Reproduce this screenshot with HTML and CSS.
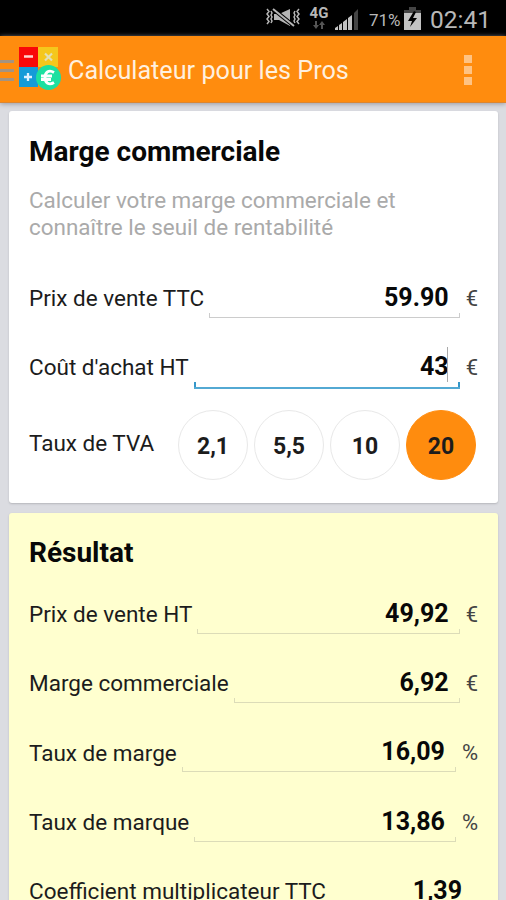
FILE: index.html
```html
<!DOCTYPE html>
<html lang="fr">
<head>
<meta charset="utf-8">
<title>Calculateur pour les Pros</title>
<link rel="stylesheet" href="styles.css">
</head>
<body>
<div class="status">
  <svg class="mute" width="34" height="20" viewBox="0 0 34 20" fill="none" stroke="#b5b5b5" stroke-width="1.5">
    <path d="M1 1l2 2.500-2 2.500 2 2.500-2 2.500 2 2.500-2 2.500M5 3l1 2-1 2 1 2-1 2 1 2-1 2M29 3l-1 2 1 2-1 2 1 2-1 2 1 2M33 1l-2 2.500 2 2.500-2 2.500 2 2.500-2 2.500 2 2.500"/>
    <path d="M8 6h5l11-5v17l-11-6H8z" fill="#b5b5b5" stroke="none"/>
    <path d="M7 1l21 17" stroke="#000" stroke-width="4"/>
    <path d="M7 1l21 17" stroke-width="2"/>
  </svg>
  <div class="network">
    <span>4G</span>
    <svg width="12" height="8" viewBox="0 0 12 8" fill="#555"><path d="M2 0h2v4h2L3 8 0 4h2zM8 8h2V4h2L9 0 6 4h2z"/></svg>
  </div>
  <svg class="signal" width="24" height="23" viewBox="0 0 24 23">
    <path d="M0 22v-2l3-2v4zM4 22v-5l3-2v7zM8 22v-8l4-3v11zM13 22V10l4-3v15z" fill="#c2c2c2"/>
    <path d="M19 22V5l4-4v21z" fill="#444"/>
  </svg>
  <span class="percent">71%</span>
  <svg class="battery" width="17" height="23" viewBox="0 0 17 23">
    <path d="M5 0h7v3h5v5H0V3h5z" fill="#444"/>
    <path d="M0 6h17v17H0z" fill="#c2c2c2"/>
    <path d="M10 4L4 14h4l-2 6 7-9H9l3-6z" fill="#000"/>
  </svg>
  <span class="clock">02:41</span>
</div>
<header class="bar">
  <div class="drawer"><i></i><i></i><i></i></div>
  <svg class="logo" width="43" height="43" viewBox="0 0 43 43">
    <path d="M0 0h19v20H0z" fill="#f90808"/>
    <path d="M19 0h20v20H19z" fill="#f5c71c"/>
    <path d="M0 20h19v20H0z" fill="#159bd8"/>
    <path d="M5 9.500h9" stroke="#ffd5d0" stroke-width="2.500"/>
    <path d="M26 6.500l7 7M33 6.500l-7 7" stroke="#e2dfb5" stroke-width="2.200"/>
    <path d="M5 30h8M9 26v8" stroke="#e0f1ff" stroke-width="2.300"/>
    <circle cx="29.500" cy="30.500" r="12.500" fill="#1ce0a0"/>
    <path d="M35 25.500c-5-3-9-.5-9 5s4 8 9 5M22 29h11M22 32.500h10" fill="none" stroke="#fff" stroke-width="2.800"/>
  </svg>
  <h1>Calculateur pour les Pros</h1>
  <div class="more"><i></i><i></i><i></i></div>
</header>
<main>
  <section class="card input">
    <h2>Marge commerciale</h2>
    <p>Calculer votre marge commerciale et<br>connaître le seuil de rentabilité</p>
    <div class="row"><label>Prix de vente TTC</label><div class="field"><b>59.90</b></div><span class="unit">€</span></div>
    <div class="row"><label>Coût d'achat HT</label><div class="field active"><b>43</b><i class="caret"></i></div><span class="unit">€</span></div>
    <div class="row rates">
      <label>Taux de TVA</label>
      <div class="choices"><b>2,1</b><b>5,5</b><b>10</b><b class="on">20</b></div>
    </div>
  </section>
  <section class="card result">
    <h2>Résultat</h2>
    <div class="row"><label>Prix de vente HT</label><div class="field"><b>49,92</b></div><span class="unit">€</span></div>
    <div class="row"><label>Marge commerciale</label><div class="field"><b>6,92</b></div><span class="unit">€</span></div>
    <div class="row"><label>Taux de marge</label><div class="field"><b>16,09</b></div><span class="unit">%</span></div>
    <div class="row"><label>Taux de marque</label><div class="field"><b>13,86</b></div><span class="unit">%</span></div>
    <div class="row"><label>Coefficient multiplicateur TTC</label><div class="field"><b>1,39</b></div><span class="unit"></span></div>
  </section>
</main>
</body>
</html>
```
FILE: styles.css
```css
* { box-sizing: border-box; }
body {
  margin: 0;
  height: 900px;
  overflow: hidden;
  background: #dbdce1;
  color: #1c1c1c;
  font-family: Roboto, "Liberation Sans", sans-serif;
}
h1, h2, p { margin: 0; }
.status {
  height: 36px;
  background: #000;
  color: #b8b8b8;
  display: flex;
  align-items: flex-start;
  padding-left: 266px;
}
.mute { margin-top: 8px; }
.network {
  width: 20px;
  margin: 5px 0 0 9px;
  display: flex;
  flex-direction: column;
  align-items: center;
  font-size: 15px;
  line-height: 16px;
  font-weight: 700;
}
.signal { margin: 8px 0 0 6px; }
.percent { margin-left: 10px; width: 32px; font-size: 17px; line-height: 40px; }
.battery { margin: 7px 0 0 3px; }
.clock { margin-left: 9px; font-size: 24.500px; line-height: 39px; }
.bar {
  height: 67px;
  background: #ff8c0e;
  display: flex;
  align-items: flex-start;
  border-bottom: 1px solid #dc8630;
  box-shadow: 0 1px 5px #9999a0;
}
.drawer { width: 14px; margin: 24px 5px 0 0; display: flex; flex-direction: column; gap: 6px; }
.drawer i { height: 3px; background: #a5937f; }
.logo { margin-top: 11px; }
h1 { margin-left: 6px; font-size: 25.200px; font-weight: 400; line-height: 70px; color: #fff0df; white-space: nowrap; }
.more { margin: 19px 0 0 auto; padding-right: 34px; display: flex; flex-direction: column; gap: 3px; }
.more i { width: 8px; height: 8px; background: #ffc383; }
main { padding: 8px 8px 0 9px; }
.card {
  padding: 0 20px;
  border-radius: 3px;
  box-shadow: 0 1px 2px #b5b6bb;
}
.input { height: 392px; background: #fff; }
.result { height: 430px; margin-top: 10px; background: #ffffcf; }
h2 { font-size: 28px; font-weight: 700; color: #080808; white-space: nowrap; }
.input h2 { line-height: 76px; height: 76px; padding-top: 3px; }
.result h2 { height: 66px; line-height: 80px; }
p { height: 76px; font-size: 22.450px; line-height: 26.500px; color: #aaa; white-space: nowrap; }
.row { height: 69.300px; display: flex; align-items: center; }
label { font-size: 22.500px; line-height: 30px; padding-top: 1px; white-space: nowrap; }
.field {
  position: relative;
  flex: 1;
  height: 40px;
  margin: 0 6px 0 5px;
  padding-right: 11px;
  border-bottom: 1px solid #ccc;
  text-align: right;
  line-height: 40px;
  font-size: 25px;
  color: #080808;
}
.field::before, .field::after {
  content: "";
  position: absolute;
  bottom: 0;
  width: 1px;
  height: 4px;
  background: #ccc;
}
.field::before { left: 0; }
.field::after { right: 0; }
.result .field { border-color: #dcdcb8; }
.result .field::before, .result .field::after { background: #dcdcb8; }
.result .row:last-child .field { padding-right: 10px; margin-right: 6px; }
.input .active { height: 42px; margin-bottom: -2px; border-bottom: 2px solid #53a9d3; }
.input .active::before, .input .active::after { width: 2px; height: 5px; background: #3597c9; }
.caret { position: absolute; right: 12px; top: 0; width: 1px; height: 35px; background: #aaa; }
.unit { font-size: 22px; padding-top: 1px; color: #444; }
.rates { justify-content: space-between; height: 87px; }
.rates label { padding-bottom: 5px; }
.choices { display: flex; gap: 6px; margin-right: 2px; }
.choices b {
  width: 70px;
  height: 70px;
  border: 1px solid #e8e8e8;
  border-radius: 50%;
  text-align: center;
  line-height: 71px;
  font-size: 23px;
}
.choices .on { background: #ff8c0e; border-color: #ff8c0e; }
```
